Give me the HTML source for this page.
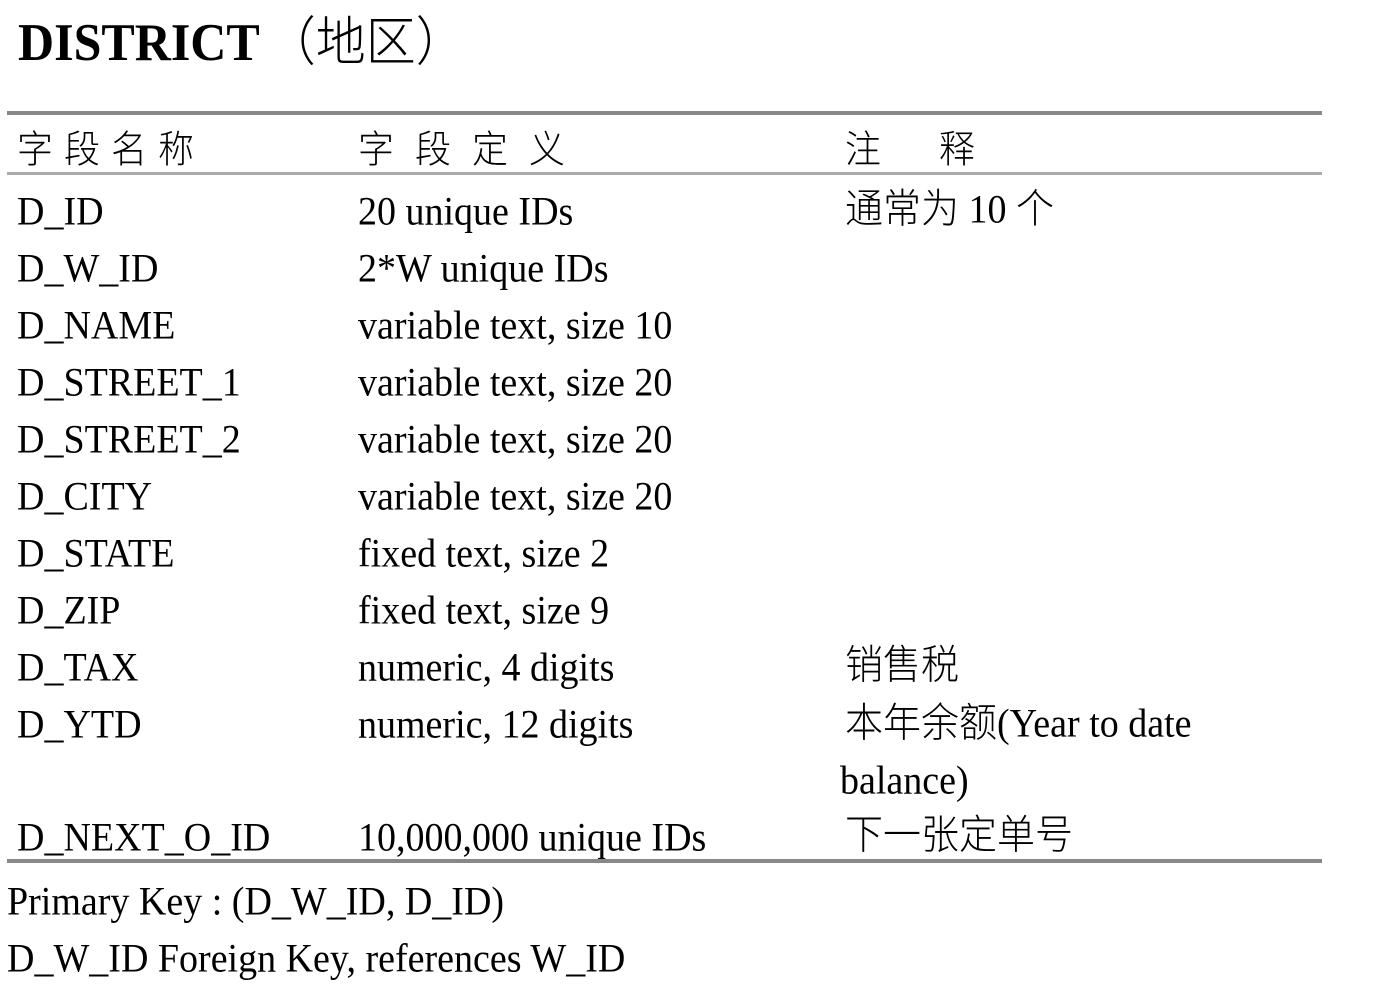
<!DOCTYPE html>
<html><head><meta charset="utf-8"><style>
body{margin:0;width:1380px;height:1002px;background:#fff;position:relative;overflow:hidden;font-family:"Liberation Serif","Noto Serif CJK SC",serif;color:#000}
.t{position:absolute;font-size:38px;line-height:38px;white-space:nowrap;transform:scaleY(1.06)}
.c{font-family:"Liberation Serif","Noto Sans CJK SC",sans-serif;font-weight:300}
.l{position:absolute;left:7px;width:1315px}
</style></head><body>
<div class="t" style="left:18px;top:17px;font-size:50px;line-height:50px;font-weight:bold">DISTRICT<span class="c" style="font-weight:300;font-size:50px;margin-left:6px">（地区）</span></div>
<div class="l" style="top:111px;height:4px;background:#888"></div>
<div class="l" style="top:172px;height:3px;background:#aaa"></div>
<div class="l" style="top:859px;height:4px;background:#888"></div>
<div class="t c" style="left:17px;top:131px;font-size:36px;letter-spacing:11px">字段名称</div>
<div class="t c" style="left:358px;top:131px;font-size:36px;letter-spacing:21px">字段定义</div>
<div class="t c" style="left:845px;top:131px;font-size:36px">注<span style="margin-left:58px">释</span></div>
<div class="t" style="left:17px;top:193px">D_ID</div><div class="t" style="left:358px;top:193px">20 unique IDs</div><div class="t" style="left:845px;top:191px"><span class="c">通常为</span> 10 <span class="c">个</span></div>
<div class="t" style="left:17px;top:250px">D_W_ID</div><div class="t" style="left:358px;top:250px">2*W unique IDs</div>
<div class="t" style="left:17px;top:307px">D_NAME</div><div class="t" style="left:358px;top:307px">variable text, size 10</div>
<div class="t" style="left:17px;top:364px">D_STREET_1</div><div class="t" style="left:358px;top:364px">variable text, size 20</div>
<div class="t" style="left:17px;top:421px">D_STREET_2</div><div class="t" style="left:358px;top:421px">variable text, size 20</div>
<div class="t" style="left:17px;top:478px">D_CITY</div><div class="t" style="left:358px;top:478px">variable text, size 20</div>
<div class="t" style="left:17px;top:535px">D_STATE</div><div class="t" style="left:358px;top:535px">fixed text, size 2</div>
<div class="t" style="left:17px;top:592px">D_ZIP</div><div class="t" style="left:358px;top:592px">fixed text, size 9</div>
<div class="t" style="left:17px;top:649px">D_TAX</div><div class="t" style="left:358px;top:649px">numeric, 4 digits</div><div class="t c" style="left:845px;top:647px">销售税</div>
<div class="t" style="left:17px;top:706px">D_YTD</div><div class="t" style="left:358px;top:706px">numeric, 12 digits</div><div class="t" style="left:845px;top:705px"><span class="c">本年余额</span>(Year to date</div>
<div class="t" style="left:840px;top:762px">balance)</div>
<div class="t" style="left:17px;top:819px">D_NEXT_O_ID</div><div class="t" style="left:358px;top:819px">10,000,000 unique IDs</div><div class="t c" style="left:845px;top:817px">下一张定单号</div>
<div class="t" style="left:7px;top:883px">Primary Key : (D_W_ID, D_ID)</div>
<div class="t" style="left:7px;top:940px">D_W_ID Foreign Key, references W_ID</div>
</body></html>
